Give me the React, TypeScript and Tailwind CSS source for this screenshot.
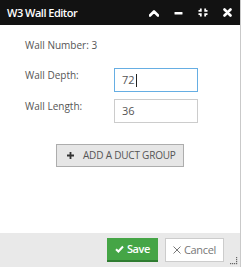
import React from "react";

const font = { fontFamily: '"Open Sans", "Noto Sans", sans-serif' };

export default function App() {
  return (
    <div className="w-[241px] h-[267px] bg-white" style={font}>
      <div className="w-[241px] h-[267px] flex flex-col border-r border-[#c9c9c9]">
        {/* Title bar */}
        <div className="h-[25px] bg-[#121212] flex items-center pl-[7px] pr-[8px]">
          <span className="text-white text-[11px] font-semibold tracking-[-0.5px] leading-none">W3 Wall Editor</span>
          <div className="ml-auto flex items-center gap-[15px] text-white">
            <svg width="10" height="8" viewBox="0 0 10 8">
              <path d="M1 6.5 L5 2.5 L9 6.5" stroke="white" strokeWidth="2.6" fill="none" strokeLinecap="round" strokeLinejoin="round" />
            </svg>
            <svg width="9" height="8" viewBox="0 0 9 8">
              <rect x="0.5" y="3" width="8" height="2.6" rx="0.6" fill="white" />
            </svg>
            <svg width="10" height="9" viewBox="0 0 10 9">
              <path d="M0.5 2.8 L2.8 2.8 L2.8 0.5 M7.2 0.5 L7.2 2.8 L9.5 2.8 M0.5 6.2 L2.8 6.2 L2.8 8.5 M7.2 8.5 L7.2 6.2 L9.5 6.2" stroke="white" strokeWidth="1.8" fill="none" />
            </svg>
            <svg width="9" height="9" viewBox="0 0 9 9">
              <path d="M1.5 1.5 L7.5 7.5 M7.5 1.5 L1.5 7.5" stroke="white" strokeWidth="2.6" strokeLinecap="round" />
            </svg>
          </div>
        </div>
        {/* Body */}
        <div className="flex-1 pl-[25px] text-[10px] text-[#555]">
          <div className="mt-[13px] h-[14px] leading-[14px]">Wall Number: 3</div>
          <div className="mt-[16px] flex items-start">
            <span className="w-[89px] leading-[14px] mt-[0px]">Wall Depth:</span>
            <div className="w-[84px] h-[24px] border border-[#66aee3] flex items-center pl-[7px] text-[11px] text-[#555]">
              72<span className="inline-block w-[1px] h-[13px] bg-[#222] ml-[1px]" />
            </div>
          </div>
          <div className="mt-[7px] flex items-start">
            <span className="w-[89px] leading-[14px]">Wall Length:</span>
            <div className="w-[84px] h-[24px] border border-[#cccccc] flex items-center pl-[7px] text-[11px] text-[#555]">
              36
            </div>
          </div>
          <div className="mt-[21px] ml-[31px] w-[128px] h-[23px] bg-[#e6e6e6] border border-[#adadad] flex items-center pl-[10px]">
            <svg width="7" height="7" viewBox="0 0 7 7">
              <path d="M3.5 0 V7 M0 3.5 H7" stroke="#333" strokeWidth="1.8" />
            </svg>
            <span className="ml-[9px] text-[10px] text-[#555] tracking-[-0.2px]">ADD A DUCT GROUP</span>
          </div>
        </div>
        {/* Footer */}
        <div className="h-[34px] bg-[#e9e9e9] relative flex items-start pt-[5px] pl-[107px]">
          <div className="w-[51px] h-[24px] bg-[#45a546] border-b-2 border-[#2f7d31] flex items-center justify-center text-white text-[11px] font-semibold tracking-[-0.4px]">
            <svg width="9" height="8" viewBox="0 0 9 8" className="mr-[3px]">
              <path d="M1 4.2 L3.4 6.5 L8 1.5" stroke="white" strokeWidth="2" fill="none" />
            </svg>
            Save
          </div>
          <div className="ml-[7px] w-[59px] h-[24px] bg-white border border-[#cccccc] flex items-center justify-center text-[#777] text-[11px] tracking-[-0.3px]">
            <svg width="8" height="8" viewBox="0 0 8 8" className="mr-[3px]">
              <path d="M0.5 0.5 L7.5 7.5 M7.5 0.5 L0.5 7.5" stroke="#777" strokeWidth="1" />
            </svg>
            Cancel
          </div>
          <svg width="9" height="9" viewBox="0 0 9 9" className="absolute right-[2px] bottom-[2px]">
            <rect x="7" y="1" width="1.2" height="1.2" fill="#666" />
            <rect x="7" y="3" width="1.2" height="1.2" fill="#666" />
            <rect x="7" y="5" width="1.2" height="1.2" fill="#666" />
            <rect x="7" y="7" width="1.2" height="1.2" fill="#666" />
            <rect x="1" y="7" width="1.2" height="1.2" fill="#666" />
            <rect x="3" y="7" width="1.2" height="1.2" fill="#666" />
            <rect x="5" y="7" width="1.2" height="1.2" fill="#666" />
          </svg>
        </div>
      </div>
    </div>
  );
}
